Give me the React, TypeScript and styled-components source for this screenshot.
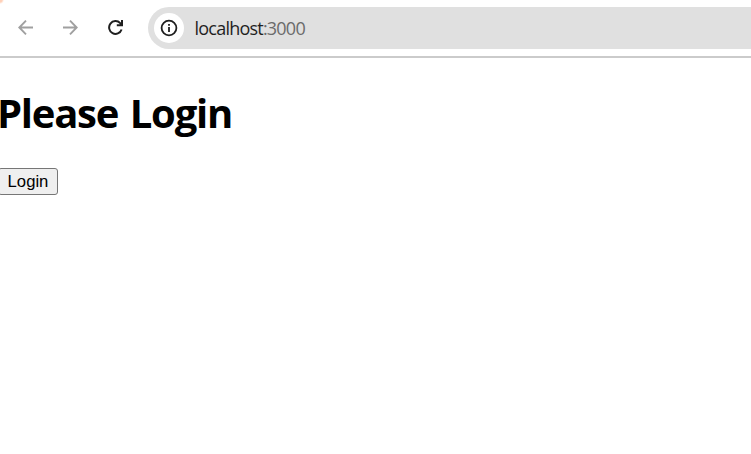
import React from "react";
import styled, { createGlobalStyle } from "styled-components";

const GlobalStyle = createGlobalStyle`
  body {
    margin: 0;
    background: #fff;
    overflow: hidden;
  }
`;

const Browser = styled.div`
  display: flex;
  flex-direction: column;
  height: 454px;
  background: radial-gradient(circle at 0 0, #ffd0b8 0 2px, #fff 4px);
`;

const Toolbar = styled.header`
  box-sizing: border-box;
  display: flex;
  align-items: center;
  flex: none;
  height: 58px;
  padding-left: 3px;
  border-bottom: 2px solid #cbcbcb;
`;

const NavButton = styled.button<{ $active?: boolean }>`
  display: flex;
  align-items: center;
  justify-content: center;
  flex: none;
  box-sizing: border-box;
  width: 45px;
  height: 42px;
  padding: 0 0 1px;
  border: 0;
  background: none;
  color: ${({ $active }) => ($active ? "#1f1f1f" : "#a0a0a0")};
`;

const AddressBar = styled.div`
  display: flex;
  align-items: center;
  flex: 1;
  box-sizing: border-box;
  height: 42px;
  margin-left: 10px;
  padding-left: 6px;
  border-radius: 21px 0 0 21px;
  background: #e0e0e0;
`;

const SiteInfo = styled.span`
  display: flex;
  align-items: center;
  justify-content: center;
  width: 30px;
  height: 30px;
  border-radius: 50%;
  background: #fff;
`;

const Url = styled.span`
  margin-left: 10.5px;
  font: 400 18px/24px "Open Sans", sans-serif;
  letter-spacing: -0.78px;
  white-space: nowrap;
  color: #1f1f1f;
`;

const Port = styled.span`
  color: #6b6b6b;
`;

const Page = styled.main`
  display: flex;
  flex-direction: column;
  align-items: flex-start;
  padding-top: 28px;
`;

const Title = styled.h1`
  margin: 0 0 28px;
  text-indent: -3px;
  font: 700 40px/54px "Open Sans", sans-serif;
  letter-spacing: -1.25px;
  word-spacing: 2.5px;
  white-space: nowrap;
  color: #000;
`;

const LoginButton = styled.button`
  box-sizing: border-box;
  width: 60px;
  height: 27px;
  margin-left: -2px;
  padding: 0;
  border: 1px solid #767676;
  border-radius: 3px;
  background: #efefef;
  font: 400 16.67px/24px "Liberation Sans", Arial, sans-serif;
  color: #000;
`;

const BackIcon = () => (
  <svg width="15" height="15" viewBox="0 0 15 15" fill="none" stroke="currentColor" strokeWidth="1.9">
    <path d="M15 7.5H1.5M8 .7 1.3 7.5 8 14.3" />
  </svg>
);

const ForwardIcon = () => (
  <svg width="15" height="15" viewBox="0 0 15 15" fill="none" stroke="currentColor" strokeWidth="1.9">
    <path d="M0 7.5h13.5M7 .7l6.7 6.8L7 14.3" />
  </svg>
);

const ReloadIcon = () => (
  <svg width="15" height="15" viewBox="0 0 15 15" fill="none" stroke="currentColor" strokeWidth="2">
    <path d="M13.6 9.5A6.4 6.4 0 1 1 12.2 3.1L14 5M14 0v5.3H8.8" />
  </svg>
);

const InfoIcon = () => (
  <svg width="18" height="18" viewBox="0 0 18 18" fill="none" stroke="#1f1f1f">
    <circle cx="9" cy="9" r="7.4" strokeWidth="1.8" />
    <path d="M9 8v5M9 5v1.8" strokeWidth="1.8" />
  </svg>
);

export default function App() {
  return (
    <>
      <GlobalStyle />
      <Browser>
        <Toolbar>
          <NavButton aria-label="Back">
            <BackIcon />
          </NavButton>
          <NavButton aria-label="Forward">
            <ForwardIcon />
          </NavButton>
          <NavButton $active aria-label="Reload">
            <ReloadIcon />
          </NavButton>
          <AddressBar>
            <SiteInfo>
              <InfoIcon />
            </SiteInfo>
            <Url>
              localhost<Port>:3000</Port>
            </Url>
          </AddressBar>
        </Toolbar>
        <Page>
          <Title>Please Login</Title>
          <LoginButton>Login</LoginButton>
        </Page>
      </Browser>
    </>
  );
}
